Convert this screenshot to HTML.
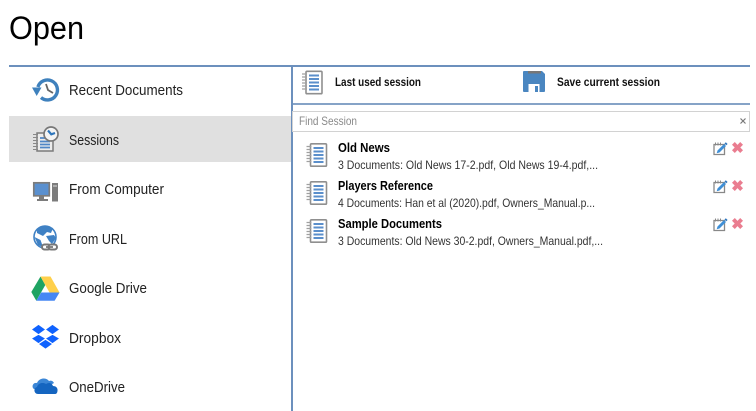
<!DOCTYPE html>
<html><head><meta charset="utf-8"><style>
html,body{margin:0;padding:0;background:#fff;width:756px;height:411px;overflow:hidden}
svg{display:block}
text{font-family:"Liberation Sans",sans-serif;fill:#222}
.n{font-size:15px}
.b{font-weight:bold;fill:#000;font-size:13px}
.h{font-weight:bold;fill:#111;font-size:12px}
.d{font-size:12px;fill:#333}
</style></head><body>
<svg width="756" height="411" viewBox="0 0 756 411" xmlns="http://www.w3.org/2000/svg">
<defs>
<g id="nb">
<rect x="4.500" y="0.800" width="16" height="22.400" rx="1" fill="#fff" stroke="#8f8f8f" stroke-width="1.600"/>
<path d="M7.500 5h10M7.500 8.500h10M7.500 12h10M7.500 15.500h10M7.500 19h10" stroke="#5b8fcb" stroke-width="1.900" fill="none"/>
<path d="M0.500 3.500h5M0.500 6.500h5M0.500 9.500h5M0.500 12.500h5M0.500 15.500h5M0.500 18.500h5" stroke="#a0a0a0" stroke-width="1.200" fill="none"/>
</g>
<g id="ed">
<path d="M1 3.500h10.500v10h-10.500z" fill="#fff" stroke="#888" stroke-width="1.300"/>
<path d="M2.500 1.500v3M5 1.500v3M7.500 1.500v3" stroke="#888" stroke-width="1"/>
<path d="M4.500 9.500l6.500-6.500 2 2-6.500 6.500-2.800.800z" fill="#3f8fd6"/>
<path d="M11.500 2.500l1.300-1.300 1.800 1.800-1.300 1.300z" fill="#2f76bd"/>
</g>
<path id="x" d="M2.800 0l2.700 2.900 2.700-2.900 2.800 2.800-2.700 2.700 2.700 2.700-2.800 2.800-2.700-2.900-2.700 2.900-2.800-2.800 2.700-2.700-2.700-2.700z" fill="#ea7d90"/>
</defs>

<text x="9" y="39" font-size="32" style="fill:#000" textLength="75" lengthAdjust="spacingAndGlyphs">Open</text>

<rect x="9" y="65" width="741" height="2" fill="#6c90bd"/>
<rect x="9" y="116" width="282" height="46" fill="#e0e0e0"/>
<rect x="291" y="65" width="2" height="346" fill="#6c90bd"/>
<rect x="293" y="103" width="457" height="2" fill="#86a3c7"/>
<rect x="292.500" y="111.500" width="457" height="20" fill="#fff" stroke="#d2d2d2"/>

<!-- Recent -->
<g>
<path d="M37.900 87A10 10 0 1 1 41 97.600" fill="none" stroke="#3f81bd" stroke-width="3.400"/>
<path d="M32 87.500h9.500l-4.800 8.500z" fill="#3f81bd"/>
<path d="M46 84l2 6 5 3" fill="none" stroke="#666" stroke-width="1.800"/>
</g>
<!-- Sessions -->
<g>
<rect x="37" y="133" width="16" height="18" fill="#ececec" stroke="#7b7b7b" stroke-width="1.500"/>
<path d="M33 134.500h5M33 137.500h5M33 140.500h5M33 143.500h5M33 146.500h5M33 149.500h5" stroke="#888" stroke-width="1"/>
<path d="M40 138h5M40 141.500h10M40 144.500h10M40 147.500h10" stroke="#4f86c6" stroke-width="1.700"/>
<circle cx="51" cy="134" r="7" fill="#f4f4f4" stroke="#777" stroke-width="1.700"/>
<path d="M48 130.500l3.300 3.800 3.700-1.300" fill="none" stroke="#2e76bb" stroke-width="2.200"/>
</g>
<!-- Computer -->
<g>
<rect x="33.800" y="182.800" width="15.500" height="13" fill="#5a90cf" stroke="#7c7c7c" stroke-width="1.700"/>
<path d="M39 196.500h5v2.500h4v2h-11v-2h2z" fill="#7c7c7c"/>
<rect x="52" y="183" width="6" height="18.500" fill="#7c7c7c"/>
<path d="M53 186h4" stroke="#ddd"/>
</g>
<!-- URL -->
<g>
<circle cx="45" cy="237" r="11" fill="#fff" stroke="#3f81c4" stroke-width="1.600"/>
<g fill="#3f81c4">
<path d="M37 229l7-3.500 9 2.500-2 5-4-1-4 4-6-3z"/>
<path d="M46 236l8-1 2 3-4 6-3-3z"/>
<path d="M34.500 237l6 3 2.500 7-5-2z"/>
</g>
<g fill="#fff" stroke="#777" stroke-width="2">
<rect x="42" y="244.500" width="8.500" height="5" rx="2.500"/>
<rect x="48.500" y="244.500" width="8.500" height="5" rx="2.500"/>
</g>
<path d="M46 247h7" stroke="#777" stroke-width="1.800"/>
</g>
<!-- Drive -->
<g>
<path d="M40.500 276.500l4.800 8.500-9 15.800-5-8.800z" fill="#1fa463"/>
<path d="M40.500 276.500h10l9 16h-10z" fill="#ffd04b"/>
<path d="M36.300 300.800l4.900-8.300h18.300l-4.900 8.300z" fill="#4687f4"/>
</g>
<!-- Dropbox -->
<g fill="#0f62fe" stroke="#fff" stroke-width="0.600">
<path d="M38.500 324.500l7 5-7 5-7-5z"/>
<path d="M52.500 324.500l7 5-7 5-7-5z"/>
<path d="M38.500 334.500l7 4-7 5-7-5z"/>
<path d="M52.500 334.500l7 4-7 5-7-5z"/>
<path d="M45.500 339.500l7 4.500-7 5-7-5z"/>
</g>
<!-- OneDrive -->
<g>
<path d="M34 389c-3-2-1-7 3-6 2-5 9-6 12-2 2-1 4 0 5 2l-12 7z" fill="#3b86d6"/>
<path d="M38 394c-4 0-5-6-1-7 1-4 6-5 9-3 3-2 6-1 7 2 3 0 5 2 4.500 5-.3 2-1 3-2.500 3z" fill="#1565c0"/>
</g>

<text class="n" x="69" y="95" textLength="114" lengthAdjust="spacingAndGlyphs">Recent Documents</text>
<text class="n" x="69" y="145" textLength="50" lengthAdjust="spacingAndGlyphs">Sessions</text>
<text class="n" x="69" y="194" textLength="95" lengthAdjust="spacingAndGlyphs">From Computer</text>
<text class="n" x="69" y="244" textLength="58" lengthAdjust="spacingAndGlyphs">From URL</text>
<text class="n" x="69" y="293" textLength="78" lengthAdjust="spacingAndGlyphs">Google Drive</text>
<text class="n" x="69" y="343" textLength="52" lengthAdjust="spacingAndGlyphs">Dropbox</text>
<text class="n" x="69" y="392" textLength="56" lengthAdjust="spacingAndGlyphs">OneDrive</text>

<use href="#nb" transform="translate(301.500,70.500)"/>
<text class="h" x="335" y="86" textLength="86" lengthAdjust="spacingAndGlyphs">Last used session</text>

<g>
<path d="M524 71h18l3 3v17a1 1 0 0 1-1 1h-20a1 1 0 0 1-1-1v-19a1 1 0 0 1 1-1z" fill="#4a86c0"/>
<rect x="528" y="71" width="13" height="2.500" fill="#777"/>
<rect x="528.500" y="84" width="11" height="8" fill="#fff"/>
<rect x="535" y="86" width="3" height="6" fill="#4a86c0"/>
</g>
<text class="h" x="557" y="86" textLength="103" lengthAdjust="spacingAndGlyphs">Save current session</text>

<text x="299" y="125" font-size="12" style="fill:#8a8a8a" textLength="58" lengthAdjust="spacingAndGlyphs">Find Session</text>
<path d="M740.500 118.500l5 5M745.500 118.500l-5 5" stroke="#777" stroke-width="1.200"/>

<use href="#nb" transform="translate(306,143)"/>
<text class="b" x="338" y="152" textLength="52" lengthAdjust="spacingAndGlyphs">Old News</text>
<text class="d" x="338" y="169" textLength="260" lengthAdjust="spacingAndGlyphs">3 Documents: Old News 17-2.pdf, Old News 19-4.pdf,...</text>
<use href="#ed" transform="translate(713,141)"/>
<use href="#x" transform="translate(732,142)"/>

<use href="#nb" transform="translate(306,181)"/>
<text class="b" x="338" y="190" textLength="95" lengthAdjust="spacingAndGlyphs">Players Reference</text>
<text class="d" x="338" y="207" textLength="257" lengthAdjust="spacingAndGlyphs">4 Documents: Han et al (2020).pdf, Owners_Manual.p...</text>
<use href="#ed" transform="translate(713,179)"/>
<use href="#x" transform="translate(732,180)"/>

<use href="#nb" transform="translate(306,219)"/>
<text class="b" x="338" y="228" textLength="104" lengthAdjust="spacingAndGlyphs">Sample Documents</text>
<text class="d" x="338" y="245" textLength="265" lengthAdjust="spacingAndGlyphs">3 Documents: Old News 30-2.pdf, Owners_Manual.pdf,...</text>
<use href="#ed" transform="translate(713,217)"/>
<use href="#x" transform="translate(732,218)"/>
</svg>
</body></html>
